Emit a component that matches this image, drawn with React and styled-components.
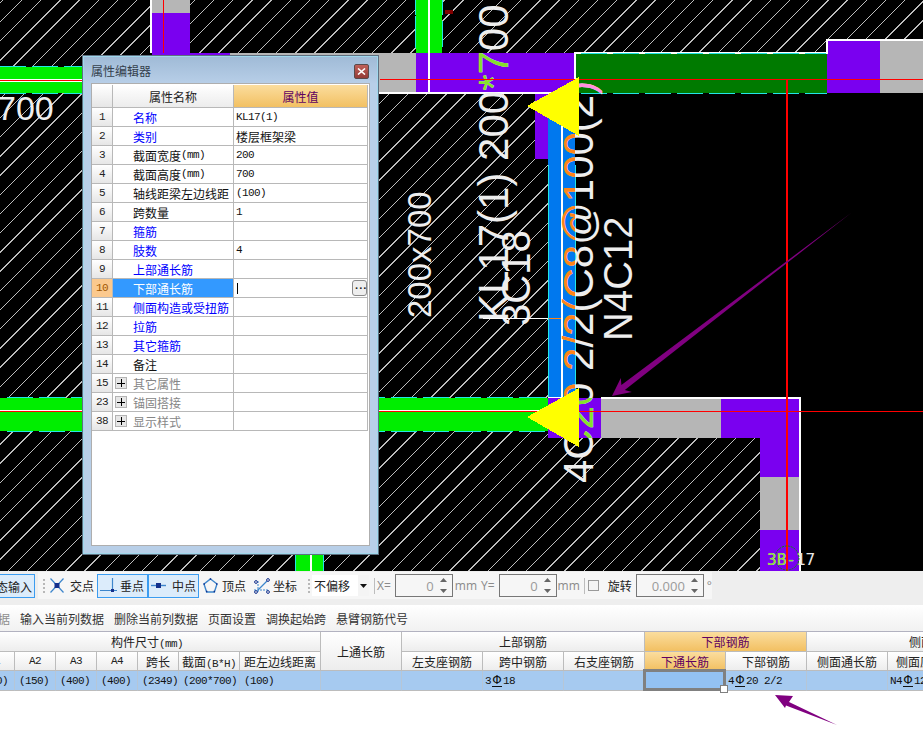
import React from 'react';
import styled, { createGlobalStyle } from 'styled-components';

const Global = createGlobalStyle`
  html, body { margin: 0; padding: 0; background: #fff; }
  * { box-sizing: border-box; }
`;

const CJK = `"Noto Sans CJK SC", "Noto Sans", sans-serif`;
const MONO = `"Liberation Mono", monospace`;
const UI = `"Open Sans", "Liberation Sans", sans-serif`;

const Page = styled.div`
  width: 923px; height: 746px; overflow: hidden; position: relative;
  display: flex; flex-direction: column; background: #fff;
  font-family: ${CJK}; font-size: 12px; color: #222;
`;

/* ---------- CAD canvas ---------- */
const Canvas = styled.div`
  position: relative; height: 571px; flex: none; background: #000; overflow: hidden;
`;
const CadSvg = styled.svg`display: block;`;
const Crisp = styled.g`shape-rendering: crispEdges;`;
const CadText = styled.text`
  font-family: "Liberation Sans", Arial, sans-serif;
  font-size: ${p => p.$size || 42}px;
  fill: ${p => p.$fill || '#eee'};
`;
const TagText = styled.text`
  font-family: "DejaVu Sans Mono", monospace;
  font-size: 16px;
`;

const PURPLE = '#7a00f0';
const GRAY = '#b6b6b6';
const GREEN = '#00ee00';
const DARKGREEN = '#007a00';
const BLUE = '#0078ee';
const RED = '#ff0000';
const CYAN = '#22e6e6';

const hatch = [];
for (let c = 2.8; c < 923 + 571 + 20; c += 19.2) hatch.push(c);

const DASH = { strokeDasharray: '26 6' };

function BeamText({ t, x, y, size, clips }) {
  const tr = `translate(${x},${y}) rotate(-90)`;
  return (
    <>
      <CadText transform={tr} $size={size}>{t}</CadText>
      {(clips || []).map(c => (
        <g key={c.id} clipPath={`url(#${c.id})`}>
          <CadText transform={tr} $size={size} $fill={c.fill}>{t}</CadText>
        </g>
      ))}
    </>
  );
}

function CadDrawing() {
  return (
    <CadSvg width="923" height="571" viewBox="0 0 923 571">
      <defs>
        <clipPath id="clipTopPurple"><rect x="416" y="53" width="159" height="39" /></clipPath>
        <clipPath id="clipBlue"><rect x="548" y="93" width="27" height="305" /></clipPath>
        <clipPath id="clipLime"><rect x="575" y="398" width="26" height="40" /></clipPath>
        <clipPath id="clipPink"><rect x="575" y="54" width="30" height="39" /></clipPath>
        <clipPath id="clipTagPurple"><rect x="760" y="530" width="39" height="41" /></clipPath>
      </defs>

      <Crisp>
        <rect width="923" height="571" fill="#000" />
        {hatch.map(c => (
          <line key={c} x1={c} y1="0" x2={c - 571} y2="571" stroke="#bdbdbd" strokeWidth="1" />
        ))}
        <polygon points="575,93 923,93 923,571 800,571 800,398 575,398" fill="#000" />

        {/* top-left pillar and beam, mostly behind the window */}
        <rect x="150" y="0" width="2" height="53" fill="#fff" />
        <rect x="152" y="0" width="38" height="13" fill={GRAY} />
        <rect x="152" y="13" width="38" height="40" fill={PURPLE} />
        <rect x="163" y="0" width="1" height="53" fill={RED} />
        <rect x="152" y="53" width="78" height="39" fill={PURPLE} />
        <rect x="230" y="53" width="186" height="39" fill={GRAY} />
        <rect x="150" y="92" width="425" height="2" fill="#fff" />

        {/* left green beams */}
        <rect x="0" y="67" width="152" height="26" fill={GREEN} />
        <line x1="0" y1="66.5" x2="152" y2="66.5" stroke={CYAN} {...DASH} />
        <line x1="0" y1="93.5" x2="152" y2="93.5" stroke={CYAN} {...DASH} />
        <rect x="0" y="79" width="152" height="3" fill="#fff" />
        <rect x="0" y="80" width="152" height="1" fill={RED} />

        <rect x="0" y="398" width="548" height="33" fill={GREEN} />
        <line x1="7" y1="397.5" x2="548" y2="397.5" stroke={CYAN} {...DASH} />
        <line x1="7" y1="431.5" x2="548" y2="431.5" stroke={CYAN} {...DASH} />
        <rect x="0" y="410" width="548" height="1" fill="#fff" />

        {/* vertical green stubs */}
        <rect x="416" y="0" width="26" height="53" fill={GREEN} />
        <line x1="415.5" y1="0" x2="415.5" y2="48" stroke={CYAN} strokeDasharray="15 1 32 4" />
        <line x1="442.5" y1="0" x2="442.5" y2="48" stroke={CYAN} strokeDasharray="15 6 26 6" />
        <rect x="428" y="0" width="2" height="92" fill="#fff" />

        <rect x="296" y="555" width="27" height="16" fill={GREEN} />
        <rect x="295" y="555" width="1" height="16" fill={CYAN} />
        <rect x="323" y="555" width="1" height="16" fill={CYAN} />
        <rect x="310" y="555" width="2" height="16" fill="#fff" />

        {/* top centre */}
        <rect x="416" y="53" width="159" height="39" fill={PURPLE} />
        <rect x="428" y="53" width="2" height="39" fill="#fff" />
        <rect x="445" y="10" width="8" height="4" fill="#800000" />

        {/* dark green beam and right column */}
        <rect x="576" y="54" width="251" height="39" fill={DARKGREEN} />
        <rect x="574" y="52" width="254" height="2" fill="#fff" />
        <rect x="574" y="52" width="2" height="41" fill="#fff" />
        <line x1="576" y1="53.5" x2="827" y2="53.5" stroke={CYAN} strokeDasharray="26 6" strokeDashoffset="27.3" />
        <line x1="576" y1="93.5" x2="827" y2="93.5" stroke={CYAN} strokeDasharray="26 6" strokeDashoffset="27.3" />
        <rect x="827" y="41" width="53" height="52" fill={PURPLE} />
        <rect x="880" y="41" width="43" height="52" fill={GRAY} />
        <rect x="826" y="39" width="97" height="2" fill="#fff" />
        <rect x="826" y="39" width="2" height="15" fill="#fff" />

        {/* centre vertical */}
        <rect x="535" y="94" width="13" height="65" fill={PURPLE} />
        <rect x="548" y="94" width="27" height="304" fill={BLUE} />
        <rect x="561" y="94" width="2" height="304" fill="#fff" />
        <rect x="548" y="165" width="1" height="233" fill={CYAN} />
        <rect x="575" y="165" width="1" height="233" fill={CYAN} />

        {/* lower-right L */}
        <rect x="548" y="398" width="53" height="40" fill={PURPLE} />
        <rect x="601" y="399" width="120" height="39" fill={GRAY} />
        <rect x="721" y="399" width="78" height="39" fill={PURPLE} />
        <rect x="760" y="438" width="39" height="39" fill={PURPLE} />
        <rect x="760" y="477" width="39" height="53" fill={GRAY} />
        <rect x="760" y="530" width="39" height="41" fill={PURPLE} />
        <rect x="601" y="397" width="200" height="2" fill="#fff" />
        <rect x="799" y="397" width="2" height="174" fill="#fff" />
        <rect x="548" y="397" width="27" height="1" fill="#fff" />
      </Crisp>

      {/* texts */}
      <CadText x="-3" y="120" $size={34}>700</CadText>
      <BeamText t="200x700" x={431} y={318} size={33} />
      <BeamText
        t="KL17(1) 200*700" x={508} y={322} size={42}
        clips={[{ id: 'clipTopPurple', fill: '#84e02c' }]}
      />
      <BeamText t="3C18" x={530} y={326} size={40} />
      <BeamText
        t="4C20 2/2(C8@100(2)" x={593} y={483} size={42}
        clips={[
          { id: 'clipBlue', fill: '#ff8418' },
          { id: 'clipLime', fill: '#84e02c' },
          { id: 'clipPink', fill: '#ff90e0' },
        ]}
      />
      <BeamText t="N4C12" x={632} y={341} size={40} />

      <Crisp>
        <rect x="483" y="318" width="65" height="1" fill="#fff" />
        <rect x="549" y="318" width="12" height="1" fill="#ff8418" />
        {/* reference lines */}
        <rect x="380" y="79" width="543" height="1" fill={RED} />
        <rect x="0" y="411" width="923" height="1" fill={RED} />
        <rect x="786" y="79" width="1.6" height="492" fill={RED} />
      </Crisp>

      {/* small axis tag */}
      <circle cx="787" cy="558" r="12" fill="none" stroke="#0a8a0a" strokeDasharray="2 1" />
      <TagText x="767" y="565" fill="#e8e8e8">3B-17</TagText>
      <g clipPath="url(#clipTagPurple)">
        <TagText x="767" y="565" fill="#86e030">3B-17</TagText>
      </g>

      {/* snap markers */}
      <polygon points="527,106 579,77 579,136" fill="#ffff00" shapeRendering="crispEdges" />
      <polygon points="527,417 579,388 579,447" fill="#ffff00" shapeRendering="crispEdges" />

      {/* annotation arrow */}
      <polygon
        points="612,396 620.8,378 621.4,385 851,213 624.8,389.9 631.8,392"
        fill="#800080"
      />
    </CadSvg>
  );
}

/* ---------- Property window ---------- */
const EditorWindow = styled.div`
  position: absolute; left: 82px; top: 55px; width: 297px; height: 500px;
  display: flex; flex-direction: column;
  padding: 0 8px 8px 8px;
  background: #b8cfe8;
  border: 1px solid #5f6f80;
  box-shadow: inset 0 0 0 1px #9fd8ec;
  background-image: linear-gradient(#9fbad6 0, #b8cfe8 28px);
`;
const TitleBar = styled.div`
  height: 27px; flex: none; display: flex; align-items: center; justify-content: space-between;
  padding-top: 2px; padding-right: 1px; color: #34404c; font-size: 12px;
`;
const CloseButton = styled.button`
  width: 15px; height: 15px; padding: 0; display: flex; align-items: center; justify-content: center;
  border: 1px solid #5a4a4a; border-radius: 2px; margin-top: 1px;
  background: linear-gradient(#c06058, #943c38);
`;
const PropPanel = styled.div`
  flex: 1; background: #fff; border: 1px solid #aeaeae; padding: 1px 0 0 0;
  display: flex; flex-direction: column;
`;
const PropRow = styled.div`
  display: grid; grid-template-columns: 21px 121px 134px;
  height: ${p => (p.$head ? 23 : 19)}px; flex: none;
`;
const Cell = styled.div`
  border-right: 1px solid #b8b8b8; border-bottom: 1px solid #b8b8b8;
  display: flex; align-items: center; min-width: 0; white-space: nowrap;
`;
const Lat = styled.span`
  font-family: ${MONO}; font-size: 11px; letter-spacing: -0.6px;
`;
const RowNum = styled(Cell)`
  justify-content: center; font-family: ${MONO}; font-size: 11px; letter-spacing: -0.6px;
  color: ${p => (p.$on ? '#a05800' : '#222')};
  background: ${p => (p.$on ? '#fbc98e' : 'linear-gradient(#fff, #e6e6e6)')};
`;
const HeadName = styled(Cell)`
  justify-content: center; color: #222; background: linear-gradient(#fff, #ececec);
`;
const HeadValue = styled(Cell)`
  justify-content: center; color: #600060; background: linear-gradient(#fbdd9e, #f2c062);
`;
const NameCell = styled(Cell)`
  padding-left: ${p => (p.$tree ? 2 : 20)}px;
  color: ${p => ({ link: '#0000ff', text: '#111', muted: '#868686', on: '#fff' }[p.$kind])};
  background: ${p => (p.$kind === 'on' ? '#3399ff' : '#fff')};
`;
const ValueCell = styled(Cell)`
  padding-left: 2px; position: relative; color: #111;
`;
const Caret = styled.span`
  width: 1px; height: 11px; background: #000; margin-left: 1px;
`;
const EllipsisButton = styled.button`
  position: absolute; right: 0; top: 1px; width: 15px; height: 16px; padding: 0;
  display: flex; align-items: center; justify-content: center;
  border: 1px solid #8a8a8a; border-radius: 3px; background: #eee;
  font: bold 11px/1 ${MONO}; color: #222; letter-spacing: -2.5px;
`;
const TreeToggle = styled.span`
  width: 12px; height: 12px; margin-right: 6px; flex: none; border: 1px solid #b4b4b4; background: #e6e6e6;
  display: flex; align-items: center; justify-content: center;
`;

const rows = [
  ['1', 'link', '名称', <Lat>KL17(1)</Lat>],
  ['2', 'link', '类别', '楼层框架梁'],
  ['3', 'text', <>截面宽度<Lat>(mm)</Lat></>, <Lat>200</Lat>],
  ['4', 'text', <>截面高度<Lat>(mm)</Lat></>, <Lat>700</Lat>],
  ['5', 'text', '轴线距梁左边线距', <Lat>(100)</Lat>],
  ['6', 'text', '跨数量', <Lat>1</Lat>],
  ['7', 'link', '箍筋', ''],
  ['8', 'link', '肢数', <Lat>4</Lat>],
  ['9', 'link', '上部通长筋', ''],
  ['10', 'on', '下部通长筋', 'edit'],
  ['11', 'link', '侧面构造或受扭筋', ''],
  ['12', 'link', '拉筋', ''],
  ['13', 'link', '其它箍筋', ''],
  ['14', 'text', '备注', ''],
  ['15', 'muted', '其它属性', '', true],
  ['23', 'muted', '锚固搭接', '', true],
  ['38', 'muted', '显示样式', '', true],
];

function PlusIcon() {
  return (
    <svg width="8" height="8" viewBox="0 0 8 8">
      <path d="M4 0v8M0 4h8" stroke="#000" strokeWidth="1" shapeRendering="crispEdges" />
    </svg>
  );
}

function PropertyEditor() {
  return (
    <EditorWindow>
      <TitleBar>
        属性编辑器
        <CloseButton aria-label="关闭">
          <svg width="9" height="7" viewBox="0 0 9 7">
            <path d="M1 0.5l7 6M8 0.5l-7 6" stroke="#fff" strokeWidth="1.6" />
          </svg>
        </CloseButton>
      </TitleBar>
      <PropPanel>
        <PropRow $head>
          <RowNum />
          <HeadName>属性名称</HeadName>
          <HeadValue>属性值</HeadValue>
        </PropRow>
        {rows.map(([n, kind, name, value, tree]) => (
          <PropRow key={n}>
            <RowNum $on={kind === 'on'}>{n}</RowNum>
            <NameCell $kind={kind} $tree={tree}>
              {tree && <TreeToggle><PlusIcon /></TreeToggle>}
              {name}
            </NameCell>
            <ValueCell>
              {value === 'edit' ? <><Caret /><EllipsisButton>···</EllipsisButton></> : value}
            </ValueCell>
          </PropRow>
        ))}
      </PropPanel>
    </EditorWindow>
  );
}

/* ---------- Snap toolbar ---------- */
const SnapBar = styled.div`
  height: 34px; flex: none; background: #eeeeee; display: flex; align-items: flex-start; padding-top: 1px;
`;
const ModeButton = styled.div`
  margin: 2px 3px 0 -20px; width: 55px; height: 24px; flex: none; display: flex; align-items: center;
  padding-left: 3px; border: 1px solid #3b9cf0; background: #dcecfb; white-space: nowrap;
`;
const ToolGroup = styled.div`
  height: 27px; display: flex; align-items: center; background: #f6f6f6; flex: none;
  width: ${p => p.$w}px;
`;
const Grip = styled.span`
  width: 2px; height: 14px; margin: 0 ${p => p.$after}px 0 ${p => p.$before}px; flex: none;
  background-image: repeating-linear-gradient(#b8b8b8 0 2px, transparent 2px 4px);
`;
const Tool = styled.div`
  height: 24px; flex: none; display: flex; align-items: center; white-space: nowrap;
  width: ${p => p.$w}px; gap: ${p => p.$gap}px; padding-left: ${p => p.$pad}px;
  color: #222;
  ${p => p.$on && 'border: 1px solid #3b9cf0; background: #dcecfb;'}
`;
const OffsetSelect = styled.div`
  display: flex; align-items: stretch; height: 21px; margin-right: 5px; flex: none;
`;
const SelectValue = styled.div`
  width: 46px; background: #fff; padding-left: 2px; display: flex; align-items: center;
`;
const SelectArrow = styled.div`
  width: 11px; background: #f4f4f4; display: flex; align-items: center; justify-content: center;
`;
const Divider = styled.span`
  width: 1px; height: 16px; background: #bdbdbd; flex: none; margin: 0 ${p => p.$right}px 0 0;
`;
const UiLabel = styled.span`
  font-family: ${UI}; font-size: 12px; color: #8a8a8a; margin-right: ${p => p.$mr}px; flex: none;
`;
const NumberBox = styled.div`
  width: ${p => p.$w}px; height: 23px; flex: none; margin-right: ${p => p.$mr}px;
  border: 1px solid #777; background: #f6f6f6; display: flex; align-items: center;
`;
const NumberValue = styled.span`
  flex: 1; text-align: right; padding-right: ${p => p.$pr}px;
  font-family: ${UI}; font-size: 13px; color: #9a9a9a;
`;
const Spinner = styled.span`
  width: 16px; height: 100%; display: flex; flex-direction: column; align-items: center; justify-content: space-between;
  padding: 3px 0;
`;
const CheckBox = styled.span`
  width: 11px; height: 11px; flex: none; border: 1px solid #9a9a9a; background: #f4f4f4; margin-right: 9px;
`;
const RotateLabel = styled.span`
  color: #222; margin-right: 4px; flex: none;
`;

const Icons = {
  cross: (
    <svg width="14" height="15" viewBox="0 0 14 15">
      <path d="M0.5 0.5l13 14M13.5 0.5l-13 14" stroke="#3d86cc" strokeWidth="1.2" fill="none" />
      <rect x="4.5" y="5" width="5" height="5" fill="#14308c" />
    </svg>
  ),
  perp: (
    <svg width="17" height="15" viewBox="0 0 17 15">
      <path d="M12.5 0v12M0 12.5h17" stroke="#3d86cc" strokeWidth="1.2" fill="none" />
      <rect x="11" y="11" width="3" height="3" fill="#14308c" />
    </svg>
  ),
  mid: (
    <svg width="15" height="7" viewBox="0 0 15 7">
      <path d="M0 3.5h15" stroke="#3d86cc" strokeWidth="1.4" fill="none" />
      <rect x="5" y="1" width="5" height="5" fill="#14308c" />
    </svg>
  ),
  top: (
    <svg width="15" height="15" viewBox="0 0 15 15">
      <path d="M7.5 1L14 6l-2.6 8H3.6L1 6z" stroke="#3d86cc" strokeWidth="1.4" fill="none" />
      <path d="M7.5 0.2v1.6M0.5 6h1.4M13 6h1.4M3 13.5h1.4M10.6 13.5h1.4" stroke="#14308c" strokeWidth="1.4" fill="none" />
    </svg>
  ),
  coord: (
    <svg width="18" height="18" viewBox="0 0 18 18">
      <path d="M5 15V3M1 13h14" stroke="#3d86cc" strokeWidth="1" strokeDasharray="2 1" fill="none" />
      <path d="M5 13l9-9" stroke="#3d86cc" strokeWidth="1.2" fill="none" />
      <circle cx="3" cy="5" r="1.4" fill="none" stroke="#14308c" />
      <circle cx="15" cy="3" r="1.4" fill="none" stroke="#14308c" />
      <circle cx="3" cy="15" r="1.4" fill="none" stroke="#14308c" />
      <circle cx="15" cy="15" r="1.4" fill="none" stroke="#14308c" />
    </svg>
  ),
};

function Spin() {
  return (
    <Spinner>
      <svg width="7" height="4" viewBox="0 0 7 4"><path d="M3.5 0L7 4H0z" fill="#666" /></svg>
      <svg width="7" height="4" viewBox="0 0 7 4"><path d="M3.5 4L7 0H0z" fill="#666" /></svg>
    </Spinner>
  );
}

function SnapToolbar() {
  return (
    <SnapBar>
      <ModeButton>动态输入</ModeButton>
      <ToolGroup $w={265}>
        <Grip $before={5} $after={2} />
        <Tool $w={50} $gap={6} $pad={3}>{Icons.cross}交点</Tool>
        <Tool $w={51} $gap={3} $pad={2} $on>{Icons.perp}垂点</Tool>
        <Tool $w={51} $gap={6} $pad={2} $on>{Icons.mid}中点</Tool>
        <Tool $w={54} $gap={4} $pad={4}>{Icons.top}顶点</Tool>
        <Tool $w={46} $gap={2} $pad={0}>{Icons.coord}坐标</Tool>
      </ToolGroup>
      <ToolGroup $w={409}>
        <Grip $before={5} $after={2} />
        <OffsetSelect>
          <SelectValue>不偏移</SelectValue>
          <SelectArrow>
            <svg width="7" height="4" viewBox="0 0 7 4"><path d="M0 0h7L3.5 4z" fill="#111" /></svg>
          </SelectArrow>
        </OffsetSelect>
        <Divider $right={2} />
        <UiLabel $mr={4}>X=</UiLabel>
        <NumberBox $w={58} $mr={2}><NumberValue $pr={2}>0</NumberValue><Spin /></NumberBox>
        <UiLabel $mr={4}>mm</UiLabel>
        <UiLabel $mr={4}>Y=</UiLabel>
        <NumberBox $w={58} $mr={1}><NumberValue $pr={2}>0</NumberValue><Spin /></NumberBox>
        <UiLabel $mr={4}>mm</UiLabel>
        <Divider $right={3} />
        <CheckBox />
        <RotateLabel>旋转</RotateLabel>
        <NumberBox $w={68} $mr={3}><NumberValue $pr={2}>0.000</NumberValue><Spin /></NumberBox>
        <UiLabel $mr={0}>°</UiLabel>
      </ToolGroup>
    </SnapBar>
  );
}

/* ---------- Action bar ---------- */
const ActionBar = styled.div`
  height: 27px; flex: none; display: flex; align-items: center; gap: 10px; white-space: nowrap;
  background: linear-gradient(#ffffff, #f1f1f1); border-bottom: 1px solid #b2b2c0;
  color: #333;
`;
const ActionClipped = styled.span`
  margin-left: -2px; color: #8e8e8e;
`;

function Actions() {
  return (
    <ActionBar>
      <ActionClipped>据</ActionClipped>
      <span>输入当前列数据</span>
      <span>删除当前列数据</span>
      <span>页面设置</span>
      <span>调换起始跨</span>
      <span>悬臂钢筋代号</span>
    </ActionBar>
  );
}

/* ---------- Span table ---------- */
const TableClip = styled.div`
  overflow: hidden; flex: none; height: 62px;
`;
const SpanTable = styled.div`
  margin-left: -26px; width: 1100px; display: grid;
  grid-template-columns: 41px 41px 41px 41px 41px 61px 81px 81px 81px 81px 81px 81px 81px 81px 101px 71px;
  grid-template-rows: 20px 19px 20px;
`;
const TH = styled.div`
  grid-column: span ${p => p.$span || 1}; grid-row: span ${p => p.$rows || 1};
  display: flex; align-items: center; justify-content: center; white-space: nowrap; overflow: hidden;
  border-right: 1px solid #bcbcbc; border-bottom: 1px solid #bcbcbc;
  background: ${p => (p.$hot ? 'linear-gradient(#fbdd9e, #f2c062)' : 'linear-gradient(#fff, #ededed)')};
  color: ${p => (p.$hot ? '#600060' : '#222')};
`;
const TD = styled.div`
  display: flex; align-items: center; white-space: nowrap; padding-left: ${p => p.$pad ?? 4}px;
  position: relative; color: #111;
  background: #a6caf0; border-right: 1px solid #b6c6d6; border-bottom: 1px solid #bcbcbc;
`;
const ActiveTD = styled(TD)`
  background: #93c1f2;
  &::before {
    content: ''; position: absolute; left: -2px; top: -2px; right: -1px; bottom: -1px;
    border: 3px solid #808080; z-index: 1;
  }
  &::after {
    content: ''; position: absolute; right: -3px; bottom: -3px; width: 6px; height: 6px;
    background: #fff; border: 1px solid #808080; z-index: 2;
  }
`;
const Rebar = styled.span`
  display: inline-block; width: 10px; text-align: center; font-family: "DejaVu Sans", sans-serif; font-size: 12px;
  line-height: 11px; border-bottom: 1px solid #111; margin: 0 1px;
`;

function SpanGrid() {
  return (
    <TableClip>
      <SpanTable>
        <TH $span={7}><span>构件尺寸<Lat>(mm)</Lat></span></TH>
        <TH $rows={2}>上通长筋</TH>
        <TH $span={3}>上部钢筋</TH>
        <TH $span={2} $hot>下部钢筋</TH>
        <TH $span={3}>侧面钢筋</TH>

        <TH><Lat>A1</Lat></TH>
        <TH><Lat>A2</Lat></TH>
        <TH><Lat>A3</Lat></TH>
        <TH><Lat>A4</Lat></TH>
        <TH>跨长</TH>
        <TH><span>截面<Lat>(B*H)</Lat></span></TH>
        <TH>距左边线距离</TH>
        <TH>左支座钢筋</TH>
        <TH>跨中钢筋</TH>
        <TH>右支座钢筋</TH>
        <TH $hot>下通长筋</TH>
        <TH>下部钢筋</TH>
        <TH>侧面通长筋</TH>
        <TH>侧面原位标注筋</TH>
        <TH>拉筋</TH>

        <TD><Lat>(150)</Lat></TD>
        <TD><Lat>(150)</Lat></TD>
        <TD><Lat>(400)</Lat></TD>
        <TD><Lat>(400)</Lat></TD>
        <TD><Lat>(2349)</Lat></TD>
        <TD><Lat>(200*700)</Lat></TD>
        <TD><Lat>(100)</Lat></TD>
        <TD />
        <TD />
        <TD $pad={2}><Lat>3</Lat><Rebar>Φ</Rebar><Lat>18</Lat></TD>
        <TD />
        <ActiveTD />
        <TD $pad={2}><Lat>4</Lat><Rebar>Φ</Rebar><Lat>20 2/2</Lat></TD>
        <TD />
        <TD $pad={2}><Lat>N4</Lat><Rebar>Φ</Rebar><Lat>12</Lat></TD>
        <TD />
      </SpanTable>
    </TableClip>
  );
}

const ArrowOverlay = styled.svg`
  position: absolute; left: 770px; top: 690px;
`;

export default function App() {
  return (
    <Page>
      <Global />
      <Canvas>
        <CadDrawing />
        <PropertyEditor />
      </Canvas>
      <SnapToolbar />
      <Actions />
      <SpanGrid />
      <ArrowOverlay width="70" height="40" viewBox="770 690 70 40">
        <polygon points="775,695 793,696 789,702 837,725 786,705.5 785,708" fill="#800080" />
      </ArrowOverlay>
    </Page>
  );
}
